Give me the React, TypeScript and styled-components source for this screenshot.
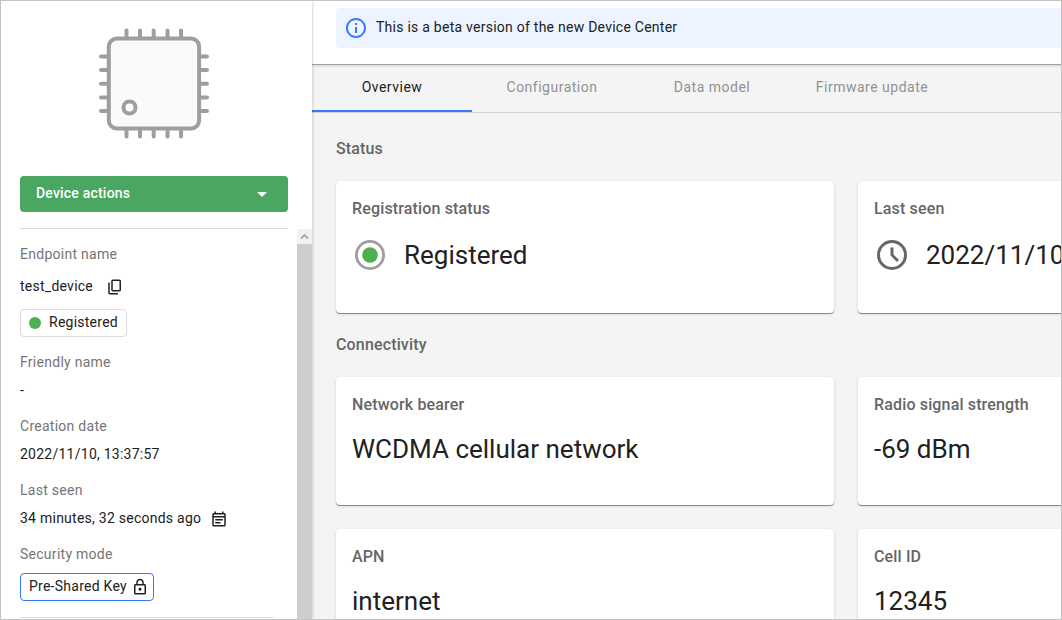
import React from 'react';
import styled, { createGlobalStyle, css } from 'styled-components';

const GlobalStyle = createGlobalStyle`
  *, *::before, *::after { box-sizing: border-box; }
  body { margin: 0; background: #fff; font-family: Roboto, "Liberation Sans", sans-serif; color: #212121; }
`;

const Frame = styled.div`
  display: flex;
  width: 1062px;
  height: 620px;
  border: 1px solid #c3c3c3;
  overflow: hidden;
  background: #f4f4f4;
`;

const Sidebar = styled.aside`
  flex: none;
  display: flex;
  flex-direction: column;
  width: 311px;
  background: #fff;
  box-shadow: 0 0 3px rgba(0, 0, 0, 0.28);
  z-index: 1;
`;

const SidebarTop = styled.div`
  display: flex;
  flex-direction: column;
  align-items: center;
  width: 268px;
  margin-left: 19px;
  padding-top: 27px;
  border-bottom: 1px solid #dcdcdc;
`;

const ChipArt = styled.svg`
  display: block;
  width: 110px;
  height: 111px;
`;

const ActionButton = styled.button`
  display: flex;
  align-items: center;
  justify-content: space-between;
  width: 268px;
  height: 36px;
  margin: 37px 0 16px;
  padding: 0 14px 2px 16px;
  border: 0;
  border-radius: 4px;
  background: #49a762;
  color: #fff;
  font: 500 14px/20px Roboto, sans-serif;
  letter-spacing: 0.2px;
`;

const Caret = styled.svg`
  width: 24px;
  height: 24px;
  margin-top: 2px;
  fill: #fff;
`;

const ScrollPane = styled.div`
  flex: 1;
  display: flex;
  min-height: 0;
`;

const Details = styled.div`
  flex: 1;
  min-width: 0;
  padding: 15px 23px 0 19px;
`;

const ScrollBar = styled.div`
  display: flex;
  flex-direction: column;
  width: 15px;
  background: #cdcdcd;
`;

const ScrollUp = styled.div`
  display: flex;
  align-items: center;
  justify-content: center;
  height: 15px;
  background: #f1f1f1;
`;

const Label = styled.div<{ $top?: number }>`
  margin-top: ${p => p.$top ?? 0}px;
  font-size: 14px;
  line-height: 20px;
  letter-spacing: 0.27px;
  color: #757575;
`;

const Value = styled.div<{ $gap?: number; $top?: number; $bottom?: number }>`
  display: flex;
  align-items: center;
  gap: ${p => p.$gap ?? 0}px;
  height: 20px;
  margin: ${p => p.$top ?? 8}px 0 ${p => p.$bottom ?? 16}px;
  font-size: 14px;
  line-height: 20px;
  letter-spacing: 0.25px;
  white-space: nowrap;
`;

const SmallIcon = styled.svg`
  flex: none;
  width: 18px;
  height: 18px;
  margin-top: 2px;
  fill: #212121;
`;

const Pill = styled.div<{ $accent?: boolean }>`
  display: flex;
  align-items: center;
  width: ${p => (p.$accent ? 134 : 107)}px;
  height: 28px;
  padding: 0 0 2px 8px;
  gap: ${p => (p.$accent ? 4 : 8)}px;
  border: 1px solid ${p => (p.$accent ? '#3479ff' : '#dcdcdc')};
  border-radius: 4px;
  font-size: 14px;
  line-height: 20px;
  letter-spacing: 0.25px;
  white-space: nowrap;
`;

const Dot = styled.span`
  width: 12px;
  height: 12px;
  margin-top: 2px;
  border-radius: 50%;
  background: #4caf50;
`;

const SecurityRow = styled.div`
  margin-top: 9px;
`;

const Rule = styled.div`
  width: 253px;
  height: 1px;
  margin-top: 16px;
  background: #dcdcdc;
`;

const Main = styled.main`
  flex: 1;
  min-width: 0;
  display: flex;
  flex-direction: column;
`;

const Header = styled.header`
  flex: none;
  height: 64px;
  padding: 7px 0 0 24px;
  border-bottom: 1px solid #a0a0a0;
  box-shadow: 0 1px 2px rgba(0, 0, 0, 0.14);
  background: #fff;
`;

const Banner = styled.div`
  display: flex;
  align-items: center;
  gap: 8px;
  height: 40px;
  padding-left: 8px;
  border-radius: 4px 0 0 4px;
  background: #edf4ff;
  font-size: 14px;
  line-height: 20px;
  letter-spacing: 0.25px;

  svg { width: 24px; height: 24px; fill: #3479ff; }
  span { margin-bottom: 2px; }
`;

const Tabs = styled.nav`
  flex: none;
  display: flex;
  height: 48px;
  border-bottom: 1px solid #d0d0d0;
`;

const Tab = styled.button<{ $active?: boolean }>`
  width: 160px;
  height: 47px;
  padding: 0 0 1px;
  border: 0;
  border-bottom: 2px solid transparent;
  background: none;
  color: #929292;
  font: 400 14px/20px Roboto, sans-serif;
  letter-spacing: 0.5px;
  ${p => p.$active && css`
    color: #212121;
    border-bottom-color: #3479ff;
  `}
`;

const Content = styled.div`
  padding-left: 24px;
`;

const SectionTitle = styled.h2<{ $top: number }>`
  margin: ${p => p.$top}px 0 20px;
  font-size: 16px;
  font-weight: 500;
  line-height: 24px;
  letter-spacing: 0.15px;
  color: #666;
`;

const CardRow = styled.div`
  display: grid;
  grid-template-columns: 498px 498px;
  gap: 24px;
  margin-bottom: 24px;
`;

const Card = styled.section<{ $height: number }>`
  height: ${p => p.$height}px;
  padding: 16px;
  border-radius: 4px;
  background: #fff;
  box-shadow: 0 1px 0 rgba(0, 0, 0, 0.36), 0 1px 3px rgba(0, 0, 0, 0.16);
`;

const CardTitle = styled.h3`
  margin: 0;
  font-size: 16px;
  font-weight: 500;
  line-height: 24px;
  letter-spacing: 0.15px;
  color: #666;
`;

const CardValue = styled.div<{ $icon?: boolean }>`
  display: flex;
  align-items: center;
  gap: 16px;
  height: 36px;
  margin-top: ${p => (p.$icon ? 16 : 14)}px;
  font-size: 26px;
  line-height: 36px;
  color: #212121;
  white-space: nowrap;

  svg { flex: none; width: 36px; height: 36px; }
`;

const pins = [13.5, 27, 40.7, 54.5, 68];

const Chip = () => (
  <ChipArt viewBox="0 0 110 111" fill="none" stroke="#9e9e9e" strokeWidth="4" strokeLinecap="round">
    {pins.map(p => (
      <g key={p}>
        <path d={`M${p + 14} 2.5v9M${p + 14} 99.5v9`} />
        <path d={`M2 ${p + 15}h9M99 ${p + 15}h9`} />
      </g>
    ))}
    <rect x="9.8" y="10.5" width="90.3" height="90" rx="8" fill="#fafafa" />
    <circle cx="30.5" cy="79.5" r="6" fill="#fff" />
  </ChipArt>
);

const InfoIcon = () => (
  <svg viewBox="0 0 24 24">
    <path d="M11 7h2v2h-2zm0 4h2v6h-2zm1-9C6.48 2 2 6.48 2 12s4.48 10 10 10 10-4.48 10-10S17.52 2 12 2zm0 18c-4.41 0-8-3.59-8-8s3.59-8 8-8 8 3.59 8 8-3.59 8-8 8z" />
  </svg>
);

const CopyIcon = () => (
  <SmallIcon viewBox="0 0 24 24">
    <path d="M9 18q-.825 0-1.412-.588T7 16V4q0-.825.588-1.412T9 2h9q.825 0 1.413.588T20 4v12q0 .825-.587 1.413T18 18zm0-2h9V4H9zm-4 6q-.825 0-1.412-.587T3 20V6h2v14h11v2z" />
  </SmallIcon>
);

const NoteIcon = () => (
  <SmallIcon viewBox="0 0 24 24">
    <path d="M7 14v-2h10v2zm0 4v-2h7v2zM19 4h-1V2h-2v2H8V2H6v2H5c-1.1 0-2 .9-2 2v14c0 1.1.9 2 2 2h14c1.1 0 2-.9 2-2V6c0-1.1-.9-2-2-2zm0 16H5V10h14zm0-12H5V6h14z" />
  </SmallIcon>
);

const LockIcon = () => (
  <SmallIcon viewBox="0 0 24 24">
    <path d="M12 17c1.1 0 2-.9 2-2s-.9-2-2-2-2 .9-2 2 .9 2 2 2zm6-9h-1V6c0-2.76-2.24-5-5-5S7 3.24 7 6v2H6c-1.1 0-2 .9-2 2v10c0 1.1.9 2 2 2h12c1.1 0 2-.9 2-2V10c0-1.1-.9-2-2-2zM8.9 6c0-1.71 1.39-3.1 3.1-3.1s3.1 1.39 3.1 3.1v2H8.9V6zM18 20H6V10h12v10z" />
  </SmallIcon>
);

const StatusIcon = () => (
  <svg viewBox="0 0 36 36">
    <circle cx="18" cy="18" r="13.6" fill="none" stroke="#9e9e9e" strokeWidth="2.8" />
    <circle cx="18" cy="18" r="7.8" fill="#4caf50" />
  </svg>
);

const ClockIcon = () => (
  <svg viewBox="0 0 24 24" fill="#666">
    <path d="m15.3 16.7 1.4-1.4-3.7-3.7V7h-2v5.4zM12 22a10 10 0 1 1 0-20 10 10 0 0 1 0 20zm0-2a8 8 0 1 0 0-16 8 8 0 0 0 0 16z" />
  </svg>
);

export default function App() {
  return (
    <>
      <GlobalStyle />
      <Frame>
        <Sidebar>
          <SidebarTop>
            <Chip />
            <ActionButton>
              Device actions
              <Caret viewBox="0 0 24 24"><path d="m7 10 5 5 5-5z" /></Caret>
            </ActionButton>
          </SidebarTop>
          <ScrollPane>
            <Details>
              <Label>Endpoint name</Label>
              <Value $gap={13} $top={12} $bottom={13}>test_device<CopyIcon /></Value>
              <Pill><Dot />Registered</Pill>
              <Label $top={15}>Friendly name</Label>
              <Value>-</Value>
              <Label>Creation date</Label>
              <Value>2022/11/10, 13:37:57</Value>
              <Label>Last seen</Label>
              <Value $gap={8.5}>34 minutes, 32 seconds ago<NoteIcon /></Value>
              <Label>Security mode</Label>
              <SecurityRow>
                <Pill $accent>Pre-Shared Key<LockIcon /></Pill>
              </SecurityRow>
              <Rule />
            </Details>
            <ScrollBar>
              <ScrollUp>
                <svg width="9" height="7" viewBox="0 0 9 7" fill="none" stroke="#a8a8a8" strokeWidth="1.8">
                  <path d="M1 5.5 4.5 2 8 5.5" />
                </svg>
              </ScrollUp>
            </ScrollBar>
          </ScrollPane>
        </Sidebar>
        <Main>
          <Header>
            <Banner><InfoIcon /><span>This is a beta version of the new Device Center</span></Banner>
          </Header>
          <Tabs>
            <Tab $active>Overview</Tab>
            <Tab>Configuration</Tab>
            <Tab>Data model</Tab>
            <Tab>Firmware update</Tab>
          </Tabs>
          <Content>
            <SectionTitle $top={24}>Status</SectionTitle>
            <CardRow>
              <Card $height={132}>
                <CardTitle>Registration status</CardTitle>
                <CardValue $icon><StatusIcon />Registered</CardValue>
              </Card>
              <Card $height={132}>
                <CardTitle>Last seen</CardTitle>
                <CardValue $icon><ClockIcon />2022/11/10</CardValue>
              </Card>
            </CardRow>
            <SectionTitle $top={-4}>Connectivity</SectionTitle>
            <CardRow>
              <Card $height={128}>
                <CardTitle>Network bearer</CardTitle>
                <CardValue>WCDMA cellular network</CardValue>
              </Card>
              <Card $height={128}>
                <CardTitle>Radio signal strength</CardTitle>
                <CardValue>-69 dBm</CardValue>
              </Card>
            </CardRow>
            <CardRow>
              <Card $height={128}>
                <CardTitle>APN</CardTitle>
                <CardValue>internet</CardValue>
              </Card>
              <Card $height={128}>
                <CardTitle>Cell ID</CardTitle>
                <CardValue>12345</CardValue>
              </Card>
            </CardRow>
          </Content>
        </Main>
      </Frame>
    </>
  );
}
